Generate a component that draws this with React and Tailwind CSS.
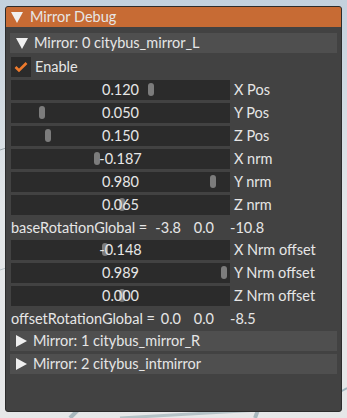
const sliders1 = [
  { value: "0.120", label: "X Pos", knob: 137 },
  { value: "0.050", label: "Y Pos", knob: 28 },
  { value: "0.150", label: "Z Pos", knob: 34 },
  { value: "-0.187", label: "X nrm", knob: 83 },
  { value: "0.980", label: "Y nrm", knob: 199 },
  { value: "0.065", label: "Z nrm", knob: 108 },
];

const sliders2 = [
  { value: "-0.148", label: "X Nrm offset", knob: 91 },
  { value: "0.989", label: "Y Nrm offset", knob: 210 },
  { value: "0.000", label: "Z Nrm offset", knob: 108 },
];

function Triangle({ open }) {
  return open ? (
    <svg width="12" height="11" viewBox="0 0 12 11" className="shrink-0">
      <polygon points="0,0 12,0 6,11" fill="#f0f0f0" />
    </svg>
  ) : (
    <svg width="11" height="12" viewBox="0 0 11 12" className="shrink-0">
      <polygon points="0,0 11,6 0,12" fill="#f0f0f0" />
    </svg>
  );
}

function Slider({ value, label, knob }) {
  return (
    <div className="flex items-center h-5">
      <div className="relative w-[219px] h-5 bg-[#2b2b2b] flex items-center justify-center shrink-0">
        {/* grab handle */}
        <div
          className="absolute top-[3px] w-[6px] h-[13px] rounded-[3px] bg-[#7c7c7c]"
          style={{ left: knob }}
        />
        <span className="relative">{value}</span>
      </div>
      <span className="ml-[4px] whitespace-nowrap">{label}</span>
    </div>
  );
}

function Vec({ name, a, b, c }) {
  return (
    <div className="flex items-center h-[19px] whitespace-nowrap">
      <span className="w-[142px] shrink-0">{name}</span>
      <span className="w-[28px] text-right shrink-0">{a}</span>
      <span className="w-[33px] text-right shrink-0">{b}</span>
      <span className="ml-[16px]">{c}</span>
    </div>
  );
}

function Header({ open, title }) {
  return (
    <div className="h-5 mx-[4px] bg-[#4f4f4f] flex items-center gap-[6px] pl-[6px]">
      <Triangle open={open} />
      <span>{title}</span>
    </div>
  );
}

export default function App() {
  return (
    <div
      className="relative w-[347px] h-[418px] overflow-hidden bg-gradient-to-b from-[#c3d1dd] via-[#e3e6e8] to-[#e6e7e8] text-[14.5px] leading-5 text-[#e6e6e6]"
      style={{ fontFamily: 'Lato, "Open Sans", sans-serif' }}
    >
      {/* scene lines behind the window */}
      <svg className="absolute inset-0" width="347" height="418">
        <line x1="0" y1="150" x2="6" y2="148" stroke="#9aa5aa" strokeWidth="1" />
        <line x1="0" y1="270" x2="6" y2="268" stroke="#b8c4c8" strokeWidth="1" />
        <line x1="340" y1="392" x2="347" y2="388" stroke="#9fb4bc" strokeWidth="2" />
        <line x1="70" y1="418" x2="78" y2="410" stroke="#a8b8be" strokeWidth="4" />
        <line x1="120" y1="418" x2="260" y2="410" stroke="#b4c2c6" strokeWidth="3" />
        <line x1="255" y1="418" x2="258" y2="410" stroke="#a8b8be" strokeWidth="4" />
      </svg>

      <div className="absolute left-[5px] top-[6px] w-[337px] h-[406px] bg-[#424242] border border-[#2c2c2c] rounded-[3px] overflow-hidden">
        {/* title bar */}
        <div className="h-5 bg-[#c76b34] flex items-center gap-[7px] pl-[5px]">
          <Triangle open />
          <span>Mirror Debug</span>
        </div>

        <div className="pt-[6px] flex flex-col gap-[3px]">
          <Header open title="Mirror: 0 citybus_mirror_L" />

          {/* checkbox */}
          <div className="flex items-center h-5 mt-[1px] pl-[5px] gap-[4px]">
            <div className="w-5 h-5 bg-[#2b2b2b] flex items-center justify-center">
              <svg width="14" height="12" viewBox="0 0 14 12">
                <polyline points="1.5,6 5,9.5 12.5,2" fill="none" stroke="#ee7a2c" strokeWidth="2.6" />
              </svg>
            </div>
            <span>Enable</span>
          </div>

          <div className="pl-[5px] flex flex-col gap-[3px]">
            {sliders1.map((s) => (
              <Slider key={s.label} {...s} />
            ))}
            <Vec name="baseRotationGlobal =" a="-3.8" b="0.0" c="-10.8" />
            {sliders2.map((s) => (
              <Slider key={s.label} {...s} />
            ))}
            <Vec name="offsetRotationGlobal =" a="0.0" b="0.0" c="-8.5" />
          </div>

          <Header title="Mirror: 1 citybus_mirror_R" />
          <Header title="Mirror: 2 citybus_intmirror" />
        </div>
      </div>
    </div>
  );
}
